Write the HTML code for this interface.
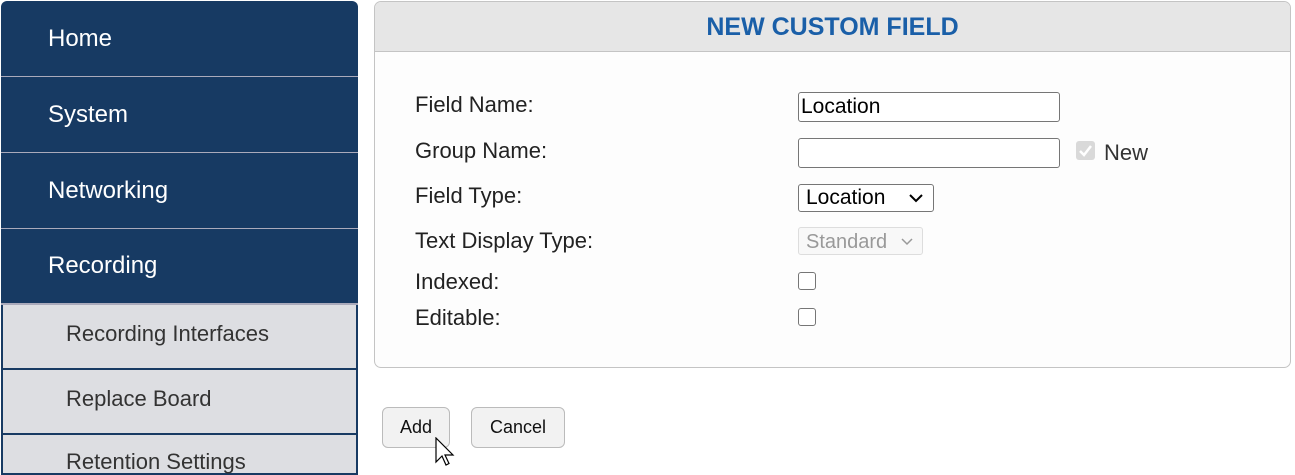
<!DOCTYPE html>
<html><head><meta charset="utf-8"><style>
*{box-sizing:border-box;margin:0;padding:0}
body{width:1295px;height:470px;overflow:hidden;background:#fff;font-family:"Liberation Sans",Arial,sans-serif;position:relative}
.a{position:absolute}
.nav{left:1px;width:357px;background:#173a63;color:#fff;font-size:24px;padding-left:47px;display:flex;align-items:center}
.sub{left:1px;width:357px;background:#dddee2;color:#333;font-size:22px;padding-left:63px;padding-bottom:5px;display:flex;align-items:center;border:2px solid #173a63;border-top:none}
.lbl{left:415px;font-size:22px;color:#222}
.inp{border:1px solid #767676;border-radius:3px;background:#fff;font-size:21px;padding-left:2px;display:flex;align-items:center;color:#000}
.cb{width:18px;height:18px;border:1.5px solid #767676;border-radius:3px;background:#fff}
.btn{border:1px solid #bbb;border-radius:6px;background:#f2f2f2;font-size:18px;display:flex;align-items:center;justify-content:center;color:#111}
</style></head><body>
<div class="a nav" style="top:1px;height:75px;border-radius:6px 6px 0 0">Home</div>
<div class="a" style="left:1px;top:76px;width:357px;height:1px;background:#aab"></div>
<div class="a nav" style="top:77px;height:75px">System</div>
<div class="a" style="left:1px;top:152px;width:357px;height:1px;background:#aab"></div>
<div class="a nav" style="top:153px;height:75px">Networking</div>
<div class="a" style="left:1px;top:228px;width:357px;height:1px;background:#aab"></div>
<div class="a nav" style="top:229px;height:74px">Recording</div>
<div class="a" style="left:1px;top:303px;width:357px;height:2px;background:#aab"></div>
<div class="a sub" style="top:305px;height:65px">Recording Interfaces</div>
<div class="a sub" style="top:370px;height:65px">Replace Board</div>
<div class="a sub" style="top:435px;height:40px;align-items:flex-start;padding-top:14px">Retention Settings</div>

<div class="a" style="left:374px;top:1px;width:917px;height:367px;border:1px solid #c4c4c4;border-radius:7px;background:#fdfdfd;overflow:hidden">
  <div style="height:50px;background:#e6e6e6;border-bottom:1px solid #c4c4c4;color:#1a5fa8;font-weight:bold;font-size:25px;text-align:center;line-height:50px">NEW CUSTOM FIELD</div>
</div>
<div class="a lbl" style="top:92px">Field Name:</div>
<div class="a lbl" style="top:138px">Group Name:</div>
<div class="a lbl" style="top:183px">Field Type:</div>
<div class="a lbl" style="top:228px">Text Display Type:</div>
<div class="a lbl" style="top:269px">Indexed:</div>
<div class="a lbl" style="top:305px">Editable:</div>

<div class="a inp" style="left:798px;top:92px;width:262px;height:30px">Location</div>
<div class="a inp" style="left:798px;top:138px;width:262px;height:30px"></div>
<div class="a" style="left:1076px;top:141px;width:19px;height:19px;background:#d9d9d9;border-radius:3px"><svg width="19" height="19"><path d="M4 10l4 4 7-9" stroke="#fff" stroke-width="2.5" fill="none"/></svg></div>
<div class="a" style="left:1104px;top:140px;font-size:22px;color:#333">New</div>
<div class="a inp" style="left:798px;top:184px;width:136px;height:28px;padding-left:7px">Location<svg class="a" style="left:110px;top:8px" width="14" height="10"><path d="M1 2l6 6 6-6" stroke="#000" stroke-width="2" fill="none"/></svg></div>
<div class="a inp" style="left:798px;top:227px;width:125px;height:28px;padding-left:7px;padding-top:2px;border-color:#ddd;background:#f8f8f8;color:#999;font-size:20px">Standard<svg class="a" style="left:102px;top:10px" width="12" height="8"><path d="M1 1l5 5 5-5" stroke="#999" stroke-width="1.5" fill="none"/></svg></div>
<div class="a cb" style="left:798px;top:272px"></div>
<div class="a cb" style="left:798px;top:308px"></div>

<div class="a btn" style="left:382px;top:407px;width:68px;height:41px">Add</div>
<div class="a btn" style="left:471px;top:407px;width:94px;height:41px">Cancel</div>
<svg class="a" style="left:435px;top:437px" width="22" height="32"><path d="M1 1v24l6-6 4 9 3-1.5-4-8.5h8z" fill="#fff" stroke="#000" stroke-width="1.2"/></svg>
</body></html>
